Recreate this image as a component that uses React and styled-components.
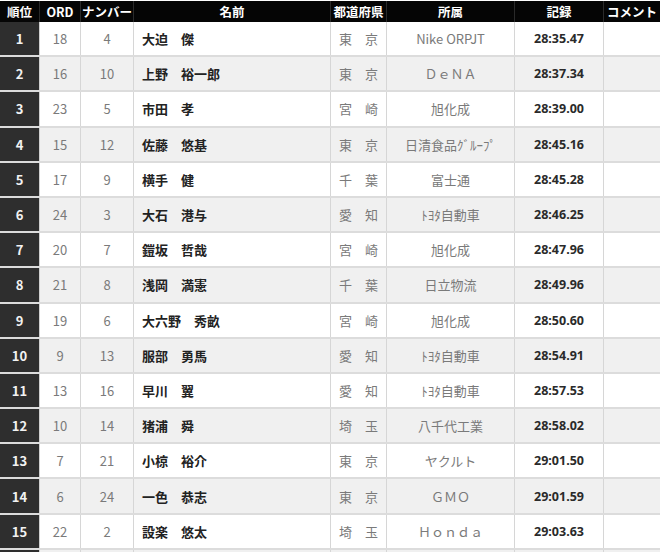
import React from "react";
import styled, { createGlobalStyle } from "styled-components";

const GlobalStyle = createGlobalStyle`
  html, body {
    margin: 0;
    padding: 0;
    background: #ffffff;
  }
  body {
    font-family: "Noto Sans CJK JP", "Noto Sans", sans-serif;
  }
`;

const columns = [
  { key: "rank", label: "順位", width: 40 },
  { key: "ord", label: "ORD", width: 41 },
  { key: "num", label: "ナンバー", width: 53 },
  { key: "name", label: "名前", width: 197 },
  { key: "pref", label: "都道府県", width: 56 },
  { key: "team", label: "所属", width: 128 },
  { key: "time", label: "記録", width: 89 },
  { key: "comment", label: "コメント", width: 56 },
];

const results = [
  [1, 18, 4, "大迫　傑", "東　京", "Nike ORPJT", "28:35.47"],
  [2, 16, 10, "上野　裕一郎", "東　京", "ＤｅＮＡ", "28:37.34"],
  [3, 23, 5, "市田　孝", "宮　崎", "旭化成", "28:39.00"],
  [4, 15, 12, "佐藤　悠基", "東　京", "日清食品ｸﾞﾙｰﾌﾟ", "28:45.16"],
  [5, 17, 9, "横手　健", "千　葉", "富士通", "28:45.28"],
  [6, 24, 3, "大石　港与", "愛　知", "ﾄﾖﾀ自動車", "28:46.25"],
  [7, 20, 7, "鎧坂　哲哉", "宮　崎", "旭化成", "28:47.96"],
  [8, 21, 8, "浅岡　満憲", "千　葉", "日立物流", "28:49.96"],
  [9, 19, 6, "大六野　秀畝", "宮　崎", "旭化成", "28:50.60"],
  [10, 9, 13, "服部　勇馬", "愛　知", "ﾄﾖﾀ自動車", "28:54.91"],
  [11, 13, 16, "早川　翼", "愛　知", "ﾄﾖﾀ自動車", "28:57.53"],
  [12, 10, 14, "猪浦　舜", "埼　玉", "八千代工業", "28:58.02"],
  [13, 7, 21, "小椋　裕介", "東　京", "ヤクルト", "29:01.50"],
  [14, 6, 24, "一色　恭志", "東　京", "ＧＭＯ", "29:01.59"],
  [15, 22, 2, "設楽　悠太", "埼　玉", "Ｈｏｎｄａ", "29:03.63"],
];

const gridTemplate = columns.map(c => `${c.width}px`).join(" ");

const App = () => {
  return (
    <Page>
      <GlobalStyle />
      <Table>
        <HeaderRow>
          {columns.map(c => (
            <HeadCell key={c.key}>{c.label}</HeadCell>
          ))}
        </HeaderRow>
        {results.map((r, i) => (
          <Row key={r[0]} shaded={i % 2 === 1}>
            <RankCell>{r[0]}</RankCell>
            <Cell>{r[1]}</Cell>
            <Cell>{r[2]}</Cell>
            <NameCell>{r[3]}</NameCell>
            <Cell>{r[4]}</Cell>
            <Cell>{r[5]}</Cell>
            <TimeCell>{r[6]}</TimeCell>
            <Cell />
          </Row>
        ))}
        <Row shaded>
          <RankCell />
          <Cell />
          <Cell />
          <Cell />
          <Cell />
          <Cell />
          <Cell />
          <Cell />
        </Row>
      </Table>
    </Page>
  );
};

export default App;

const Page = styled.div`
  width: 660px;
  height: 552px;
  overflow: hidden;
  background: #fff;
`;

const Table = styled.div`
  display: flex;
  flex-direction: column;
  padding-top: 1px;
`;

const HeaderRow = styled.div`
  display: grid;
  grid-template-columns: ${gridTemplate};
  height: 21px;
  background: #050505;
`;

const HeadCell = styled.div`
  display: flex;
  align-items: center;
  justify-content: center;
  color: #fff;
  font-size: 12.5px;
  font-weight: 700;
  white-space: nowrap;
  border-right: 1px solid #2a2a2a;
  &:last-child {
    border-right: 0;
  }
`;

const Row = styled.div`
  display: grid;
  grid-template-columns: ${gridTemplate};
  height: 35.2px;
  box-sizing: border-box;
  border-bottom: 2px solid #dcdcdc;
  background: ${props => (props.shaded ? "#f0f0f0" : "#ffffff")};
`;

const Cell = styled.div`
  display: flex;
  align-items: center;
  justify-content: center;
  color: #7a7a7a;
  font-size: 13px;
  white-space: nowrap;
  border-right: 1px solid #d6d6d6;
  &:last-child {
    border-right: 0;
  }
`;

const RankCell = styled(Cell)`
  background: #2e2e2e;
  color: #f2f2f2;
  font-weight: 700;
  border-right: 1px solid #cfcfcf;
`;

const NameCell = styled(Cell)`
  justify-content: flex-start;
  padding-left: 8px;
  color: #222;
  font-weight: 700;
`;

const TimeCell = styled(Cell)`
  color: #2a2a2a;
  font-weight: 700;
  font-family: "Noto Sans", "Noto Sans CJK JP", sans-serif;
  font-size: 12.5px;
`;
